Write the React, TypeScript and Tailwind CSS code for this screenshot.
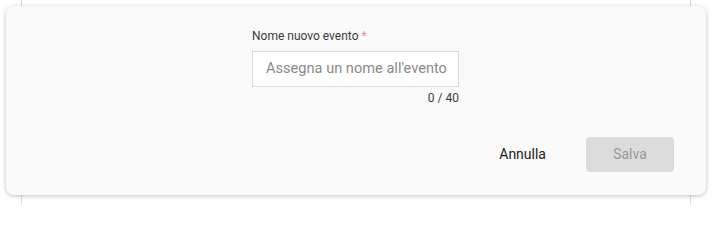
export default function App() {
  return (
    <div className="relative h-[204px] w-[715px] overflow-hidden bg-white font-['Roboto',sans-serif]">
      {/* page column lines behind the dialog */}
      <div className="absolute inset-y-0 left-[21px] w-px bg-[#dcdcdc]" />
      <div className="absolute inset-y-0 left-[690px] w-px bg-[#dcdcdc]" />

      <div className="relative ml-[6px] mt-[6px] flex h-[189px] w-[700px] flex-col rounded-[8px] bg-[#fafafa] shadow-[0_1px_4px_rgba(0,0,0,0.25)]">
        <div className="ml-[246px] mt-[22px] w-[207px]">
          <label className="block text-[12px] leading-[16px] text-[#3a3a3a]">
            Nome nuovo evento <span className="text-[#f08a8a]">*</span>
          </label>
          <div className="mt-[7px] flex h-[36px] items-center border border-[#dadada] bg-white px-[13px]">
            <span className="whitespace-nowrap text-[14.6px] text-[#8a8a8a]">
              Assegna un nome all'evento
            </span>
          </div>
          <div className="mt-[3px] text-right text-[12px] leading-[16px] text-[#3a3a3a]">
            0 / 40
          </div>
        </div>

        <div className="ml-auto mr-[32px] mt-[31px] flex items-center">
          <button className="mr-[40px] text-[14px] text-[#222]">Annulla</button>
          <button className="h-[35px] w-[88px] rounded-[4px] bg-[#dcdcdc] text-[14px] text-[#999]">
            Salva
          </button>
        </div>
      </div>
    </div>
  );
}
